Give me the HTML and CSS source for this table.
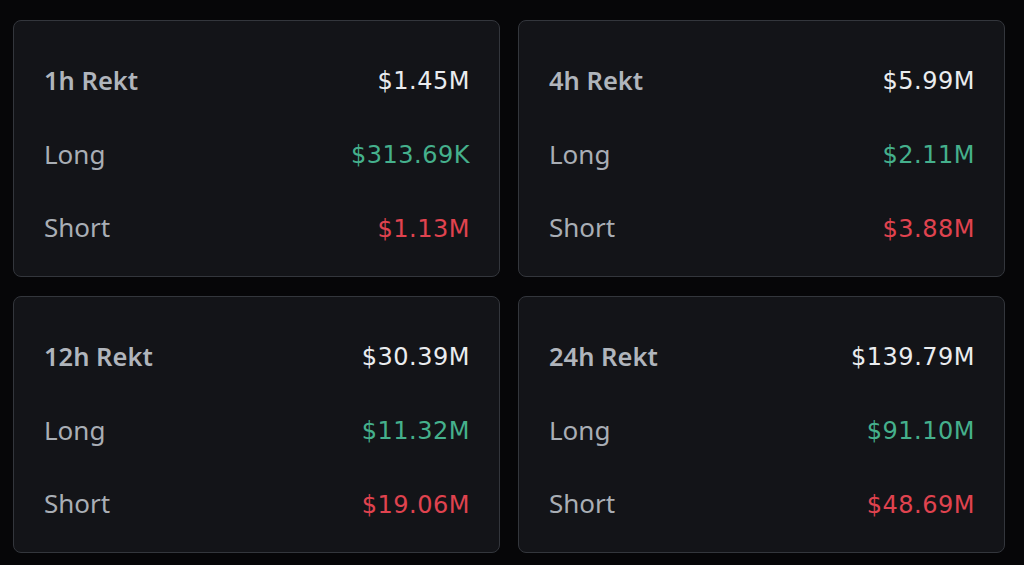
FILE: index.html
```html
<!DOCTYPE html>
<html>
<head>
<meta charset="utf-8">
<link rel="stylesheet" href="styles.css">
</head>
<body>
<div class="grid">
  <div class="card">
    <div class="row head"><span class="label">1h Rekt</span><span class="val total">$1.45M</span></div>
    <div class="row"><span class="label">Long</span><span class="val long">$313.69K</span></div>
    <div class="row"><span class="label">Short</span><span class="val short">$1.13M</span></div>
  </div>
  <div class="card">
    <div class="row head"><span class="label">4h Rekt</span><span class="val total">$5.99M</span></div>
    <div class="row"><span class="label">Long</span><span class="val long">$2.11M</span></div>
    <div class="row"><span class="label">Short</span><span class="val short">$3.88M</span></div>
  </div>
  <div class="card">
    <div class="row head"><span class="label">12h Rekt</span><span class="val total">$30.39M</span></div>
    <div class="row"><span class="label">Long</span><span class="val long">$11.32M</span></div>
    <div class="row"><span class="label">Short</span><span class="val short">$19.06M</span></div>
  </div>
  <div class="card">
    <div class="row head"><span class="label">24h Rekt</span><span class="val total">$139.79M</span></div>
    <div class="row"><span class="label">Long</span><span class="val long">$91.10M</span></div>
    <div class="row"><span class="label">Short</span><span class="val short">$48.69M</span></div>
  </div>
</div>
</body>
</html>
```
FILE: styles.css
```css
html, body {
  margin: 0;
  padding: 0;
  background: #060608;
  width: 1024px;
  height: 565px;
  overflow: hidden;
}
.grid {
  display: grid;
  grid-template-columns: 487px 487px;
  grid-auto-rows: 257px;
  gap: 19px 18px;
  padding: 20px 0 0 13px;
}
.card {
  box-sizing: border-box;
  background: #131418;
  border: 1px solid #33363c;
  border-radius: 8px;
  padding: 22px 29px 12px 30px;
  display: flex;
  flex-direction: column;
}
.row {
  height: 74px;
  display: flex;
  justify-content: space-between;
  align-items: center;
  font-family: "Noto Sans", sans-serif;
  font-size: 26px;
}
.label {
  color: #a9aeb5;
}
.head .label {
  font-weight: 600;
  font-size: 25.5px;
  color: #b0b5bc;
}
.val {
  font-family: "DejaVu Sans", sans-serif;
  font-size: 24px;
  letter-spacing: 0.5px;
  margin-top: 3px;
}
.total { color: #eaecef; }
.long { color: #45b08c; }
.short { color: #e0434f; }
```
